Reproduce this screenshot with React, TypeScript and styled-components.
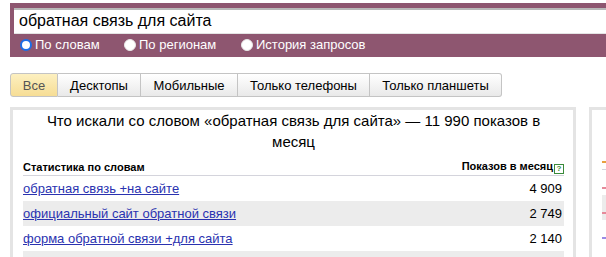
import React from 'react';
import styled, { createGlobalStyle } from 'styled-components';

const GlobalStyle = createGlobalStyle`
  body {
    margin: 0;
    background: #fff;
    font-family: "Liberation Sans", Arial, sans-serif;
    overflow: hidden;
  }
`;

const Page = styled.div`
  width: 606px;
  height: 257px;
  overflow: hidden;
`;

const SearchBar = styled.div`
  margin: 3px 0 0 10px;
  padding: 5px 0 0 4px;
  background: #8e5670;
  height: 49px;
`;

const Input = styled.div`
  height: 23px;
  background: #fff;
  border-top: 2px solid #b8b8b8;
  border-bottom: 1px solid #e4e4e4;
  padding-left: 5px;
  font-size: 16px;
  line-height: 22px;
  color: #000;
`;

const RadioRow = styled.div`
  display: flex;
  align-items: center;
  height: 21px;
  padding-left: 6px;
`;

const RadioItem = styled.label<{ $w: number }>`
  display: flex;
  align-items: center;
  gap: 3px;
  width: ${p => p.$w}px;
  font-size: 13px;
  color: #fff;
`;

const RadioDot = styled.span<{ $on?: boolean }>`
  box-sizing: border-box;
  width: 12px;
  height: 12px;
  border-radius: 50%;
  background: #fff;
  border: ${p => (p.$on ? '2px solid #1c6ee8' : '1px solid #e8e8e8')};
`;

const Tabs = styled.div`
  display: flex;
  margin: 16px 0 0 10px;
`;

const Tab = styled.div<{ $active?: boolean; $w: number }>`
  box-sizing: border-box;
  width: ${p => p.$w}px;
  height: 24px;
  display: flex;
  align-items: center;
  justify-content: center;
  font-size: 13px;
  color: ${p => (p.$active ? '#555' : '#000')};
  border: 1px solid #c4c4c4;
  border-left-width: ${p => (p.$active ? 1 : 0)}px;
  background: ${p =>
    p.$active
      ? 'linear-gradient(#fdf0c0, #f6dd95)'
      : 'linear-gradient(#ffffff, #e9e9e9)'};
  &:first-child {
    border-radius: 3px 0 0 3px;
  }
  &:last-child {
    border-radius: 0 3px 3px 0;
  }
`;

const Panels = styled.div`
  display: flex;
  gap: 13px;
  margin: 10px 0 0 10px;
`;

const Panel = styled.div<{ $w: number }>`
  box-sizing: border-box;
  flex: none;
  width: ${p => p.$w}px;
  height: 160px;
  border: 3px solid #e4e4e4;
  border-bottom: none;
  padding: 0 9px 0 10px;
`;

const Title = styled.div`
  font-size: 15px;
  line-height: 21px;
  text-align: center;
  padding: 0 12px;
  color: #000;
`;

const Table = styled.div`
  margin-top: 8px;
`;

const HeadRow = styled.div`
  display: flex;
  justify-content: space-between;
  align-items: center;
  height: 14px;
  padding-bottom: 1px;
  border-bottom: 1px solid #d4d4dc;
  font-size: 11px;
  font-weight: bold;
  color: #000;
`;

const Help = styled.span`
  display: inline-block;
  box-sizing: border-box;
  width: 10px;
  height: 10px;
  margin-left: 1px;
  border: 1px solid #3a8a3a;
  color: #3a8a3a;
  font-size: 8px;
  line-height: 8px;
  text-align: center;
  vertical-align: -1px;
`;

const Row = styled.div<{ $alt?: boolean }>`
  display: flex;
  justify-content: space-between;
  align-items: center;
  height: 25px;
  background: ${p => (p.$alt ? '#ececec' : 'transparent')};
  font-size: 13px;
`;

const Phrase = styled.a`
  color: #2a32b0;
  text-decoration: underline;
`;

const Count = styled.span`
  color: #000;
  padding-right: 2px;
`;

const rows = [
  { text: 'обратная связь +на сайте', count: '4 909' },
  { text: 'официальный сайт обратной связи', count: '2 749' },
  { text: 'форма обратной связи +для сайта', count: '2 140' },
  { text: '', count: '' },
];

const SideDash = styled.span<{ $c: string }>`
  display: block;
  width: 4px;
  height: 2px;
  background: ${p => p.$c};
`;

const SideHead = styled.div`
  height: 60px;
  display: flex;
  align-items: flex-end;
  padding-bottom: 6px;
  box-sizing: border-box;
  border-bottom: 1px solid #d4d4dc;
`;

const SideRow = styled.div<{ $alt?: boolean }>`
  height: 25px;
  display: flex;
  align-items: flex-end;
  padding-bottom: 6px;
  box-sizing: border-box;
  background: ${p => (p.$alt ? '#ececec' : 'transparent')};
`;

const App: React.FC = () => {
  return (
    <Page>
      <GlobalStyle />
      <SearchBar>
        <Input>обратная связь для сайта</Input>
        <RadioRow>
          <RadioItem $w={104}>
            <RadioDot $on />
            По словам
          </RadioItem>
          <RadioItem $w={117}>
            <RadioDot />
            По регионам
          </RadioItem>
          <RadioItem $w={160}>
            <RadioDot />
            История запросов
          </RadioItem>
        </RadioRow>
      </SearchBar>

      <Tabs>
        <Tab $active $w={48}>Все</Tab>
        <Tab $w={83}>Десктопы</Tab>
        <Tab $w={97}>Мобильные</Tab>
        <Tab $w={132}>Только телефоны</Tab>
        <Tab $w={132}>Только планшеты</Tab>
      </Tabs>

      <Panels>
        <Panel $w={566}>
          <Title>
            Что искали со словом «обратная связь для сайта» — 11 990 показов в месяц
          </Title>
          <Table>
            <HeadRow>
              <span>Статистика по словам</span>
              <span>
                Показов в месяц<Help>?</Help>
              </span>
            </HeadRow>
            {rows.map((r, i) => (
              <Row key={i} $alt={i % 2 === 1}>
                <Phrase href="#">{r.text}</Phrase>
                <Count>{r.count}</Count>
              </Row>
            ))}
          </Table>
        </Panel>
        <Panel $w={100}>
          <SideHead>
            <SideDash $c="#e8a040" />
          </SideHead>
          <SideRow><SideDash $c="#e58a9a" /></SideRow>
          <SideRow $alt><SideDash $c="#e58a9a" /></SideRow>
          <SideRow><SideDash $c="#9a8ae5" /></SideRow>
        </Panel>
      </Panels>
    </Page>
  );
};

export default App;
